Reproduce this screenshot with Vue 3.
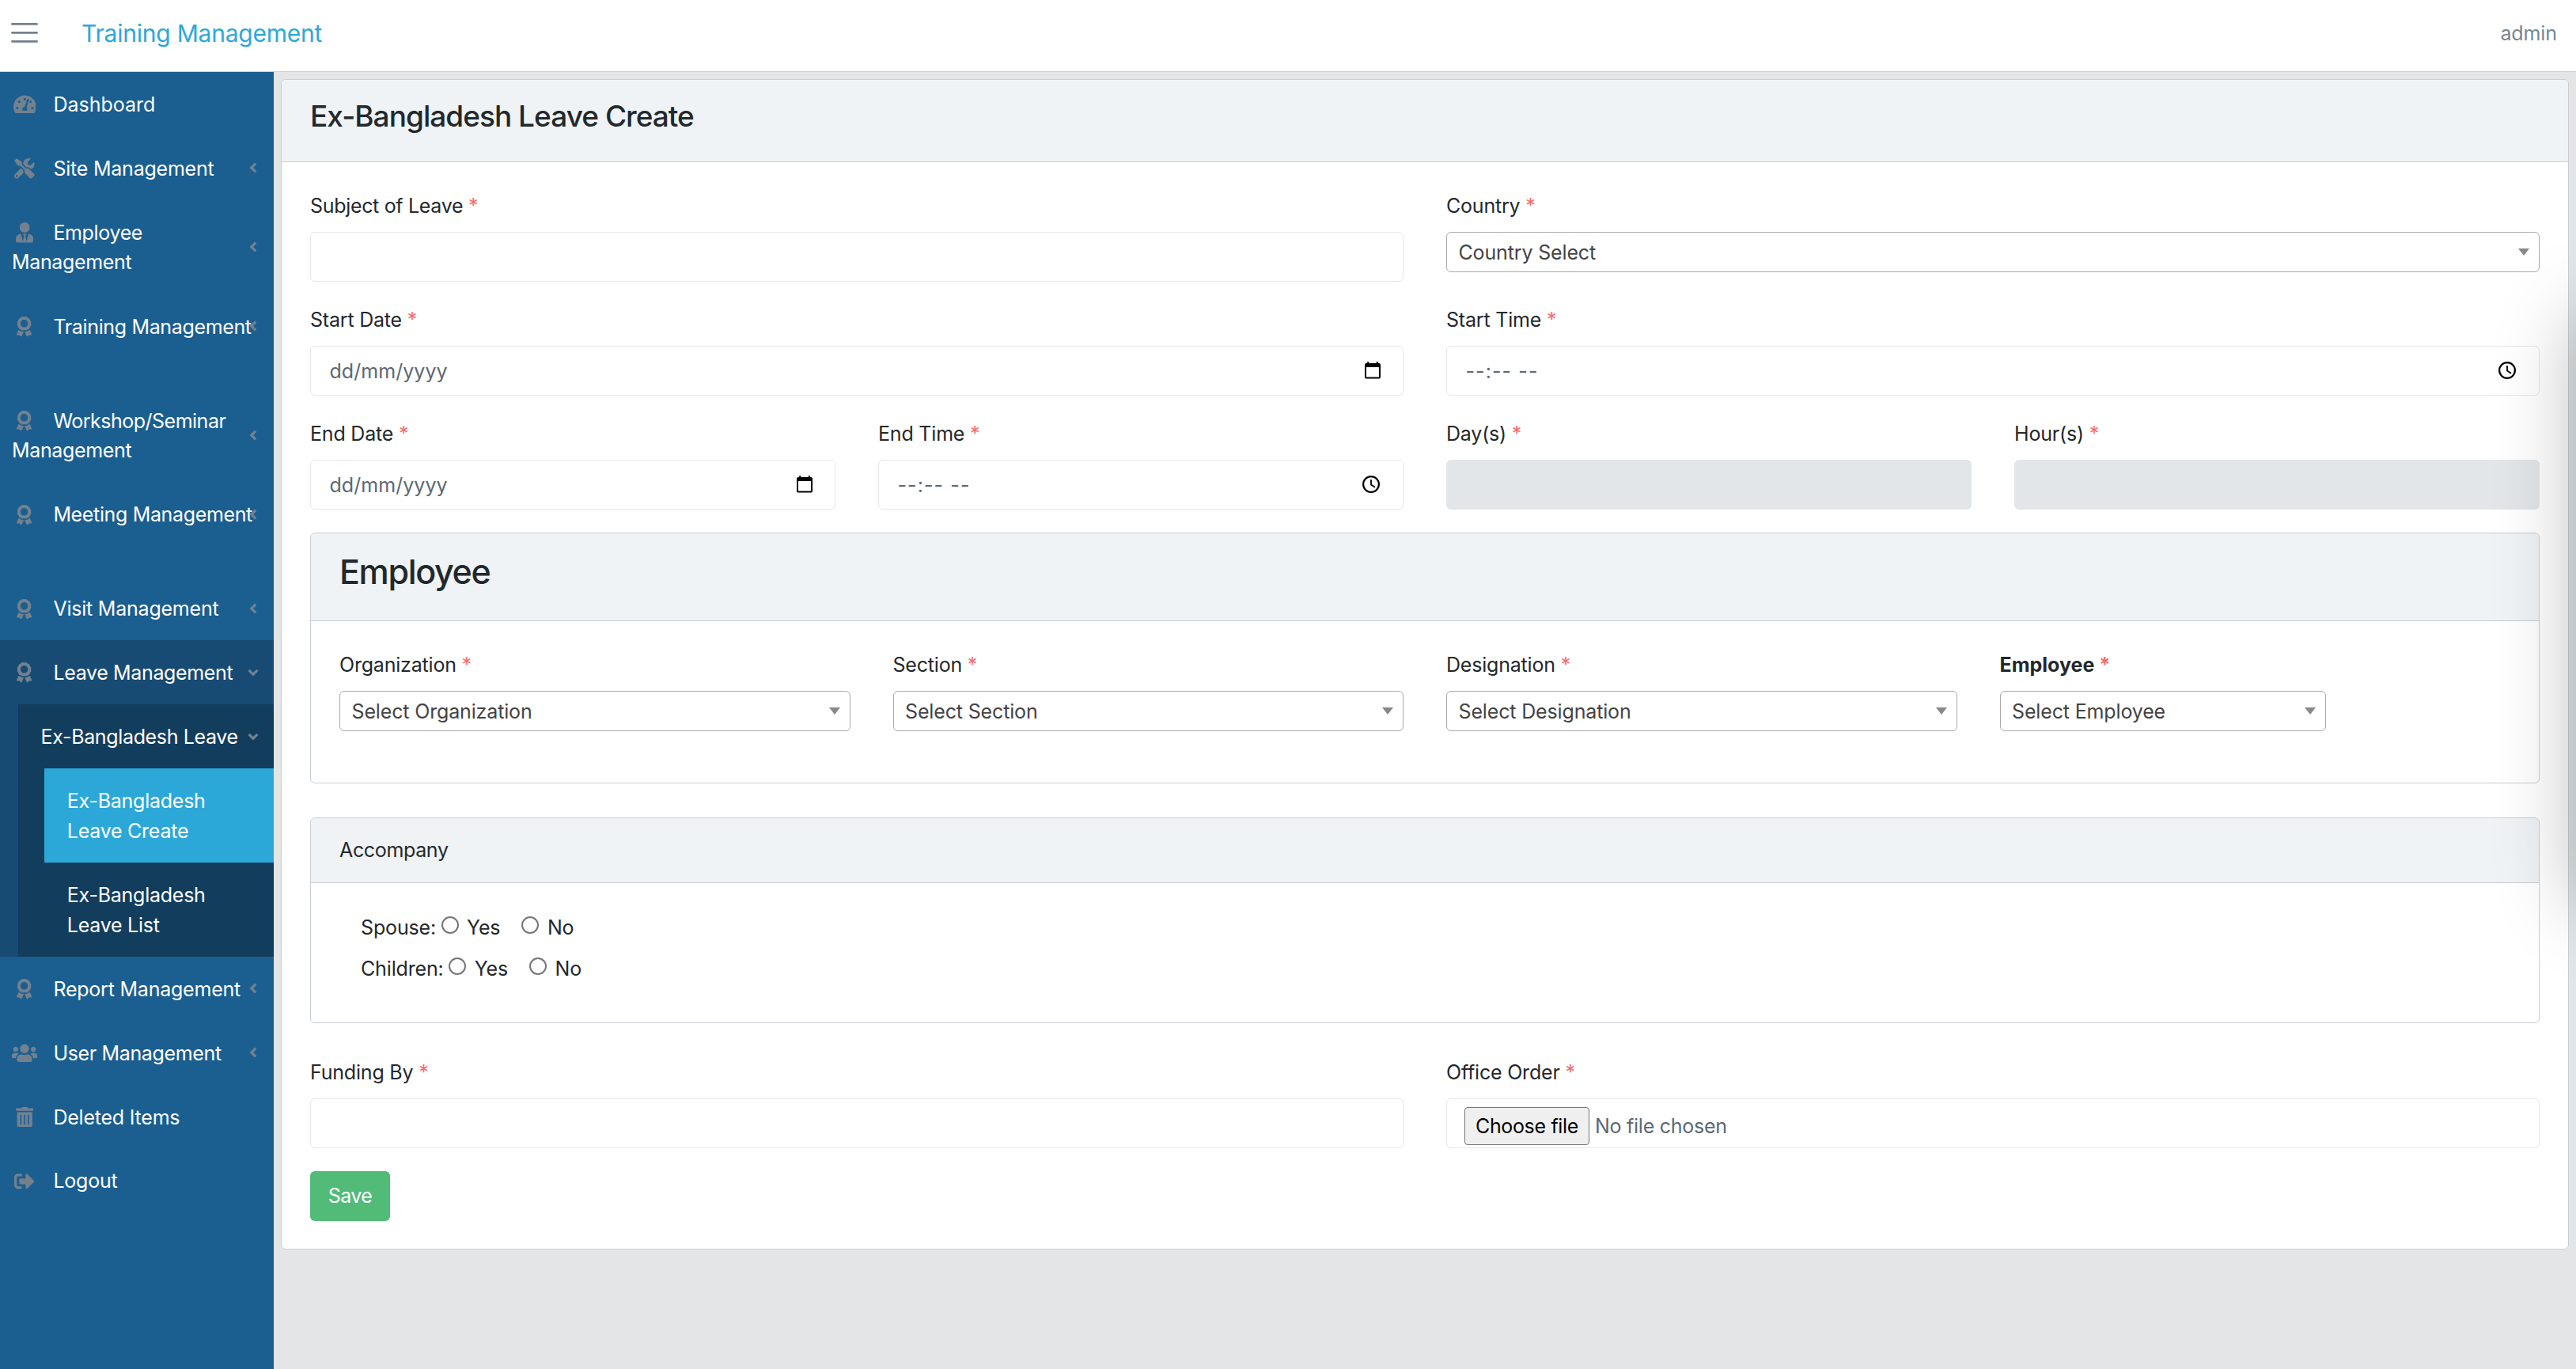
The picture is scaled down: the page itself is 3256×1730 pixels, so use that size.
<script setup>
const icons = {
  dashboard: {
    box: '0 0 576 512', w: 28.8,
    d: 'M288 32C128.94 32 0 160.94 0 320c0 52.8 14.25 102.26 39.06 144.8 5.61 9.62 16.3 15.2 27.44 15.2h443c11.14 0 21.83-5.58 27.44-15.2C561.75 422.26 576 372.8 576 320c0-159.06-128.94-288-288-288zm0 64c14.71 0 26.58 10.13 30.32 23.65-1.11 2.26-2.64 4.23-3.45 6.67l-9.22 27.67c-5.13 3.49-10.97 6.01-17.64 6.01-17.67 0-32-14.33-32-32S270.33 96 288 96zM96 384c-17.67 0-32-14.33-32-32s14.33-32 32-32 32 14.33 32 32-14.33 32-32 32zm48-160c-17.67 0-32-14.33-32-32s14.33-32 32-32 32 14.33 32 32-14.33 32-32 32zm246.77-72.41l-61.33 184C343.13 347.33 352 364.54 352 384c0 11.72-3.38 22.55-8.88 32H232.88c-5.5-9.45-8.88-20.28-8.88-32 0-33.94 26.5-61.43 59.9-63.59l61.34-184.01c4.17-12.56 17.73-19.45 30.36-15.17 12.57 4.19 19.35 17.79 15.17 30.36zm14.66 57.2l15.52-46.55c3.47-1.29 7.13-2.23 11.05-2.23 17.67 0 32 14.33 32 32s-14.33 32-32 32c-11.38-.01-20.89-6.28-26.57-15.22zM480 384c-17.67 0-32-14.33-32-32s14.33-32 32-32 32 14.33 32 32-14.33 32-32 32z',
  },
  tools: {
    box: '0 0 512 512', w: 25.6,
    d: 'M501.1 395.7L384 278.6c-23.1-23.1-57.6-27.6-85.4-13.9L192 158.1V96L64 0 0 64l96 128h62.1l106.6 106.6c-13.6 27.8-9.2 62.3 13.9 85.4l117.1 117.1c14.6 14.6 38.2 14.6 52.7 0l52.7-52.7c14.5-14.6 14.5-38.2 0-52.7zM331.7 225c28.3 0 54.9 11 74.9 31l19.4 19.4c15.8-6.9 30.8-16.5 43.8-29.5 37.1-37.1 49.7-89.3 37.9-136.7-2.2-9-13.5-12.1-20.1-5.5l-74.4 74.4-67.9-11.3L334 98.9l74.4-74.4c6.6-6.6 3.4-17.9-5.7-20.2-47.4-11.7-99.6.9-136.6 37.9-28.5 28.5-41.9 66.1-41.2 103.6l82.1 82.1c8.1-1.9 16.5-2.9 24.7-2.9zm-103.9 82l-56.7-56.7L18.7 402.8c-25 25-25 65.5 0 90.5s65.5 25 90.5 0l123.6-123.6c-7.6-19.9-9.9-41.6-5-62.7zM64 472c-13.2 0-24-10.8-24-24 0-13.3 10.7-24 24-24s24 10.7 24 24c0 13.2-10.7 24-24 24z',
  },
  tie: {
    box: '0 0 448 512', w: 22.4,
    d: 'M224 256c70.7 0 128-57.3 128-128S294.7 0 224 0 96 57.3 96 128s57.3 128 128 128zm95.8 32.6L272 480l-32-136 32-56h-96l32 56-32 136-47.8-191.4C56.9 292 0 350.3 0 422.4V464c0 26.5 21.5 48 48 48h352c26.5 0 48-21.5 48-48v-41.6c0-72.1-56.9-130.4-128.2-133.8z',
  },
  award: {
    box: '0 0 384 512', w: 19.2,
    d: 'M97.12 362.63c-8.69-8.69-4.16-6.24-25.12-11.85-9.51-2.55-17.87-7.45-25.43-13.32L1.2 448.7c-4.39 10.77 3.81 22.47 15.43 22.03l52.69-2.01L105.56 507c8 8.44 22.04 5.81 26.43-4.96l52.05-127.62c-10.84 6.04-22.87 9.58-35.31 9.58-19.5 0-37.82-7.59-51.61-21.37zM382.8 448.7l-45.37-111.24c-7.56 5.88-15.92 10.77-25.43 13.32-21.07 5.64-16.45 3.18-25.12 11.85-13.79 13.78-32.12 21.37-51.62 21.37-12.44 0-24.47-3.55-35.31-9.58L252 502.04c4.39 10.77 18.44 13.4 26.43 4.96l36.25-38.28 52.69 2.01c11.62.44 19.82-11.27 15.43-22.03zM263 340c15.28-15.55 17.03-14.21 38.79-20.14 13.89-3.79 24.75-14.84 28.47-28.98 7.48-28.4 5.54-24.97 25.95-45.75 10.17-10.35 14.14-25.44 10.42-39.58-7.47-28.38-7.48-24.42 0-52.83 3.72-14.14-.25-29.23-10.42-39.58-20.41-20.78-18.47-17.36-25.95-45.75-3.72-14.14-14.58-25.19-28.47-28.98-27.88-7.61-24.52-5.62-44.95-26.41-10.17-10.35-25-14.4-38.89-10.61-27.87 7.6-23.98 7.61-51.9 0-13.89-3.79-28.72.25-38.89 10.61-20.41 20.78-17.05 18.8-44.94 26.41-13.89 3.79-24.75 14.84-28.47 28.98-7.47 28.39-5.54 24.97-25.95 45.75-10.17 10.35-14.15 25.44-10.42 39.58 7.47 28.36 7.48 24.4 0 52.82-3.72 14.14.25 29.23 10.42 39.59 20.41 20.78 18.47 17.35 25.95 45.75 3.72 14.14 14.58 25.19 28.47 28.98C104.6 325.96 106.27 325 121 340c13.23 13.47 33.84 15.88 49.74 5.82a39.676 39.676 0 0 1 42.53 0c15.89 10.06 36.5 7.65 49.73-5.82zM97.66 175.96c0-53.03 42.24-96.02 94.34-96.02s94.34 42.99 94.34 96.02-42.24 96.02-94.34 96.02-94.34-42.98-94.34-96.02z',
  },
  users: {
    box: '0 0 640 512', w: 32,
    d: 'M96 224c35.3 0 64-28.7 64-64s-28.7-64-64-64-64 28.7-64 64 28.7 64 64 64zm448 0c35.3 0 64-28.7 64-64s-28.7-64-64-64-64 28.7-64 64 28.7 64 64 64zm32 32h-64c-17.6 0-33.5 7.1-45.1 18.6 40.3 22.1 68.9 62 75.1 109.4h66c17.7 0 32-14.3 32-32v-32c0-35.3-28.7-64-64-64zm-256 0c61.9 0 112-50.1 112-112S381.9 32 320 32 208 82.1 208 144s50.1 112 112 112zm76.8 32h-8.3c-20.8 10-43.9 16-68.5 16s-47.6-6-68.5-16h-8.3C179.6 288 128 339.6 128 403.2V432c0 26.5 21.5 48 48 48h288c26.5 0 48-21.5 48-48v-28.8c0-63.6-51.6-115.2-115.2-115.2zm-223.7-13.4C161.5 263.1 145.6 256 128 256H64c-35.3 0-64 28.7-64 64v32c0 17.7 14.3 32 32 32h65.9c6.3-47.4 34.9-87.3 75.2-109.4z',
  },
  trash: {
    box: '0 0 448 512', w: 22.4,
    d: 'M32 464a48 48 0 0 0 48 48h288a48 48 0 0 0 48-48V128H32zm272-256a16 16 0 0 1 32 0v224a16 16 0 0 1-32 0zm-96 0a16 16 0 0 1 32 0v224a16 16 0 0 1-32 0zm-96 0a16 16 0 0 1 32 0v224a16 16 0 0 1-32 0zM432 32H312l-9.4-18.7A24 24 0 0 0 281.1 0H166.8a23.72 23.72 0 0 0-21.4 13.3L136 32H16A16 16 0 0 0 0 48v32a16 16 0 0 0 16 16h416a16 16 0 0 0 16-16V48a16 16 0 0 0-16-16z',
  },
  logout: {
    box: '0 0 512 512', w: 25.6,
    d: 'M497 273L329 441c-15 15-41 4.5-41-17v-96H152c-13.3 0-24-10.7-24-24v-96c0-13.3 10.7-24 24-24h136V88c0-21.4 25.9-32 41-17l168 168c9.3 9.4 9.3 24.6 0 34zM192 436v-40c0-6.6-5.4-12-12-12H96c-17.7 0-32-14.3-32-32V160c0-17.7 14.3-32 32-32h84c6.6 0 12-5.4 12-12V76c0-6.6-5.4-12-12-12H96c-53 0-96 43-96 96v192c0 53 43 96 96 96h84c6.6 0 12-5.4 12-12z',
  },
}

const nav = [
  { icon: 'dashboard', text: 'Dashboard', spacing: 'loose' },
  { icon: 'tools', text: 'Site Management', arrow: 'left', spacing: 'semi' },
  { icon: 'tie', text: 'Employee', rest: 'Management', arrow: 'left', size: 'tall' },
  { icon: 'award', text: 'Training Management', arrow: 'left', size: 'tall first' },
  { icon: 'award', text: 'Workshop/Seminar', rest: 'Management', arrow: 'left', size: 'tall', spacing: 'tight' },
  { icon: 'award', text: 'Meeting Management', arrow: 'left', size: 'tall first' },
  { icon: 'award', text: 'Visit Management', arrow: 'left', spacing: 'semi' },
  { icon: 'award', text: 'Leave Management', arrow: 'down', open: true },
  { icon: 'award', text: 'Report Management', arrow: 'left', spacing: 'semi' },
  { icon: 'users', text: 'User Management', arrow: 'left' },
  { icon: 'trash', text: 'Deleted Items', spacing: 'semi' },
  { icon: 'logout', text: 'Logout', spacing: 'semi' },
]

const employeeSelects = [
  { label: 'Organization', value: 'Select Organization' },
  { label: 'Section', value: 'Select Section' },
  { label: 'Designation', value: 'Select Designation' },
  { label: 'Employee', value: 'Select Employee', bold: true },
]
</script>

<template>
  <div class="page">
    <header class="topbar">
      <svg class="burger" width="34" height="26" viewBox="0 0 34 26">
        <path d="M1.5 2.400h31M1.5 13.400h31M1.5 24.400h31" />
      </svg>
      <span class="brand">Training Management</span>
      <span class="user">admin</span>
    </header>

    <div class="main">
      <nav class="sidebar">
        <div v-for="item in nav" :key="item.text" class="group" :class="{ open: item.open }">
          <a class="item" :class="[item.size, item.spacing]">
            <span class="line">
              <span class="ico">
                <svg :viewBox="icons[item.icon].box" :width="icons[item.icon].w" height="25.6"><path :d="icons[item.icon].d" /></svg>
              </span>
              <span>{{ item.text }}</span>
            </span>
            <span v-if="item.rest" class="line rest">{{ item.rest }}</span>
            <svg v-if="item.arrow" class="arrow" :class="item.arrow" viewBox="0 0 14 14" width="14" height="14"><path d="M10.200 1.600 4.800 7l5.400 5.400" /></svg>
          </a>
          <div v-if="item.open" class="sub">
            <a class="item sub-head">
              <span class="line">Ex-Bangladesh Leave</span>
              <svg class="arrow down" viewBox="0 0 14 14" width="14" height="14"><path d="M10.200 1.600 4.800 7l5.400 5.400" /></svg>
            </a>
            <div class="leaves">
              <a class="item leaf active"><span class="line">Ex-Bangladesh</span><span class="line">Leave Create</span></a>
              <a class="item leaf"><span class="line">Ex-Bangladesh</span><span class="line">Leave List</span></a>
            </div>
          </div>
        </div>
      </nav>

      <main class="content">
        <section class="card outer">
          <div class="card-head title-head"><h4>Ex-Bangladesh Leave Create</h4></div>
          <div class="card-body">
            <div class="grid two">
              <div class="field">
                <label class="snug">Subject of Leave <i>*</i></label>
                <div class="control"></div>
              </div>
              <div class="field">
                <label>Country <i>*</i></label>
                <div class="select">Country Select<b></b></div>
              </div>
              <div class="field">
                <label>Start Date <i>*</i></label>
                <div class="control date">dd/mm/yyyy
                  <svg class="cal" viewBox="0 0 20 22" width="20" height="22"><path fill-rule="evenodd" d="M3.200 0h2v2h9.600V0h2v2H18a2 2 0 0 1 2 2v15.500a2 2 0 0 1-2 2H2a2 2 0 0 1-2-2V4a2 2 0 0 1 2-2h1.200zM2 7v12.500h16V7z" /></svg>
                </div>
              </div>
              <div class="field">
                <label>Start Time <i>*</i></label>
                <div class="control time"><span>--:-- --</span>
                  <svg class="clock" viewBox="0 0 22 22" width="22" height="22"><circle cx="11" cy="11" r="9.900" /><path d="M11 5v6.500l5 3.200" /></svg>
                </div>
              </div>
            </div>
            <div class="grid four">
              <div class="field">
                <label>End Date <i>*</i></label>
                <div class="control date">dd/mm/yyyy
                  <svg class="cal" viewBox="0 0 20 22" width="20" height="22"><path fill-rule="evenodd" d="M3.200 0h2v2h9.600V0h2v2H18a2 2 0 0 1 2 2v15.500a2 2 0 0 1-2 2H2a2 2 0 0 1-2-2V4a2 2 0 0 1 2-2h1.200zM2 7v12.500h16V7z" /></svg>
                </div>
              </div>
              <div class="field">
                <label>End Time <i>*</i></label>
                <div class="control time"><span>--:-- --</span>
                  <svg class="clock" viewBox="0 0 22 22" width="22" height="22"><circle cx="11" cy="11" r="9.900" /><path d="M11 5v6.500l5 3.200" /></svg>
                </div>
              </div>
              <div class="field">
                <label>Day(s) <i>*</i></label>
                <div class="control disabled"></div>
              </div>
              <div class="field">
                <label>Hour(s) <i>*</i></label>
                <div class="control disabled"></div>
              </div>
            </div>

            <section class="card employee">
              <div class="card-head"><h3>Employee</h3></div>
              <div class="employee-body">
                <div v-for="s in employeeSelects" :key="s.label" class="field" :class="{ bold: s.bold }">
                  <label>{{ s.label }} <i>*</i></label>
                  <div class="select">{{ s.value }}<b></b></div>
                </div>
              </div>
            </section>

            <section class="card accompany">
              <div class="card-head">Accompany</div>
              <div class="radios">
                <div class="radio-row">
                  <span class="who">Spouse:</span>
                  <span class="dot"></span><span class="yes">Yes</span>
                  <span class="dot"></span><span>No</span>
                </div>
                <div class="radio-row">
                  <span class="who">Children:</span>
                  <span class="dot"></span><span class="yes">Yes</span>
                  <span class="dot"></span><span>No</span>
                </div>
              </div>
            </section>

            <div class="grid two">
              <div class="field">
                <label>Funding By <i>*</i></label>
                <div class="control"></div>
              </div>
              <div class="field">
                <label>Office Order <i>*</i></label>
                <div class="control file"><span class="choose">Choose file</span><span class="none">No file chosen</span></div>
              </div>
            </div>
            <button class="save" type="button">Save</button>
          </div>
        </section>
      </main>
    </div>
    <div class="edge-shadow"></div>
  </div>
</template>

<style>
body {
  margin: 0;
}
</style>

<style scoped>
* {
  box-sizing: border-box;
}
.page {
  position: relative;
  width: 100%;
  height: 1730px;
  overflow: hidden;
  display: flex;
  flex-direction: column;
  background: #e4e5e6;
  color: #23282c;
  font-family: Inter, 'Liberation Sans', sans-serif;
  font-size: 25px;
  line-height: 38px;
  letter-spacing: -0.15px;
}
.topbar {
  flex: none;
  height: 91px;
  padding: 0 24px 7px 14px;
  display: flex;
  align-items: center;
  background: #fff;
  border-bottom: 1px solid #c8ced3;
}
.burger {
  margin-top: -1px;
  fill: none;
  stroke: #73818f;
  stroke-width: 2.9;
  stroke-linecap: round;
}
.brand {
  margin-left: 55px;
  font-size: 30px;
  letter-spacing: -0.22px;
  color: #2ca8d8;
}
.user {
  margin: 1px 0 0 auto;
  color: #768692;
  letter-spacing: -0.1px;
}
.main {
  flex: 1;
  display: flex;
  min-height: 0;
}

/* sidebar */
.sidebar {
  flex: none;
  width: 346px;
  background: #1b5e90;
  color: #fff;
}
.item {
  position: relative;
  display: block;
  height: 80.9px;
  padding: 22px 0 0 15px;
  letter-spacing: -0.35px;
  white-space: nowrap;
}
.item.tall {
  height: 118.9px;
}
.item.loose {
  letter-spacing: 0;
}
.item.semi {
  letter-spacing: -0.22px;
}
.item.tight .line:first-child {
  letter-spacing: -0.5px;
}
.line {
  display: flex;
  align-items: center;
  height: 38px;
}
.line.rest {
  margin-top: -0.6px;
}
.ico {
  display: flex;
  justify-content: center;
  width: 32px;
  margin: 0 20.4px 0 0;
}
.ico svg {
  flex: none;
  fill: #73818f;
}
.arrow {
  position: absolute;
  right: 19.500px;
  top: 50%;
  margin-top: -7px;
  fill: none;
  stroke: #73818f;
  stroke-width: 3.3;
}
.arrow.down {
  transform: rotate(-90deg);
}
.item.first .arrow {
  top: 40.500px;
}
.open {
  background: #174b73;
}
.sub {
  margin-left: 23px;
  background: #133d5d;
}
.sub-head {
  padding-left: 28.600px;
}
.leaves {
  margin-left: 33px;
}
.leaf {
  height: 118.9px;
  padding-left: 28.800px;
  letter-spacing: -0.25px;
}
.leaf.active {
  background: #2ca8d8;
}

/* cards */
.content {
  flex: 1;
  padding: 9px 9px 0 9px;
}
.card {
  background: #fff;
  border: 1px solid #c8ced3;
  border-radius: 6px;
}
.card-head {
  background: #eff3f6;
  border-bottom: 1px solid #c8ced3;
  border-radius: 5px 5px 0 0;
}
.outer {
  height: 1479px;
}
.title-head {
  height: 104px;
  padding: 23px 36px 0;
}
h4 {
  margin: 0;
  font-size: 37px;
  line-height: 46px;
  font-weight: 500;
  letter-spacing: -0.97px;
}
h3 {
  margin: 0;
  font-size: 43px;
  line-height: 54px;
  font-weight: 500;
  letter-spacing: -1.35px;
}
.card-body {
  padding: 35.500px 36px 0;
}
.grid {
  display: grid;
  column-gap: 54px;
}
.two {
  grid-template-columns: 1fr 1fr;
}
.four {
  grid-template-columns: repeat(4, 1fr);
}
.field {
  height: 144px;
}
label {
  display: block;
  height: 38px;
  margin-bottom: 14.400px;
  white-space: pre;
  letter-spacing: -0.2px;
}
label.snug {
  letter-spacing: -0.32px;
}
label i {
  font-style: normal;
  color: #f86c6b;
}
.control {
  display: flex;
  align-items: center;
  height: 63px;
  padding: 2px 0 0 23.500px;
  border: 1px solid #e4e7ea;
  border-radius: 6px;
  color: #5c6873;
}
.date {
  letter-spacing: 0.05px;
}
.time span {
  letter-spacing: 1.1px;
}
.cal {
  margin: -3px 28px 0 auto;
  fill: #000;
}
.clock {
  margin: -3px 29px 0 auto;
  fill: none;
  stroke: #000;
  stroke-width: 2.2;
}
.clock path {
  stroke-width: 1.8;
}
.disabled {
  background: #e2e6e9;
}
.select {
  display: flex;
  align-items: center;
  height: 51px;
  padding: 1px 12px 0 14.500px;
  border: 1px solid #aaa;
  border-radius: 6px;
  color: #444;
}
.select b {
  margin: -1px 0 0 auto;
  border: 7px solid transparent;
  border-top: 9px solid #888;
  border-bottom: 0;
}
.employee {
  height: 317px;
  margin-top: 0.500px;
}
.employee .card-head {
  height: 111px;
  padding: 21px 36px 0;
}
.employee-body {
  display: grid;
  grid-template-columns: repeat(4, 1fr);
  column-gap: 54px;
  padding: 36px 36px 0;
}
.employee-body label {
  margin-bottom: 14px;
}
.bold label {
  font-weight: 700;
  letter-spacing: 0;
}
.bold .select {
  width: 412px;
}
.accompany {
  height: 260px;
  margin: 43px 0;
}
.accompany .card-head {
  height: 82px;
  padding: 21px 36px 0;
  letter-spacing: -0.35px;
}
.radios {
  padding: 30px 63px 0;
}
.radio-row {
  display: flex;
  align-items: center;
  height: 52px;
}
.radio-row span {
  flex: none;
}
.who {
  margin-right: 6.500px;
}
.dot {
  width: 22px;
  height: 22px;
  margin: -6px 10.500px 0 0;
  border: 2px solid #767676;
  border-radius: 50%;
}
.yes {
  margin-right: 27px;
}
.file {
  padding-left: 22px;
  padding-top: 7px;
}
.choose {
  height: 48px;
  padding: 4px 13px 0;
  border: 1.500px solid #767676;
  border-radius: 4px;
  background: #efefef;
  color: #000;
  letter-spacing: -0.35px;
}
.none {
  margin-left: 7px;
  letter-spacing: -0.25px;
}
.save {
  display: block;
  width: 101px;
  height: 63px;
  margin-top: -0.500px;
  padding: 0 0 1px;
  border: 0;
  border-radius: 6px;
  background: #52bb78;
  color: #fff;
  font: inherit;
  letter-spacing: -0.6px;
}
.edge-shadow {
  position: absolute;
  left: 100%;
  top: 400px;
  width: 400px;
  height: 740px;
  box-shadow: 0 0 95px rgba(0, 0, 0, 0.27);
}
</style>
